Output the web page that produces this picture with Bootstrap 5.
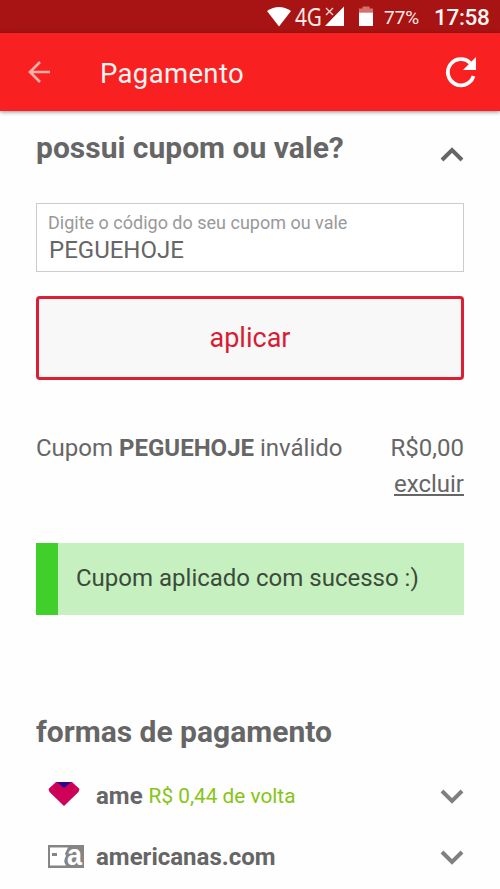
<!DOCTYPE html>
<html lang="pt-BR">
<head>
<meta charset="utf-8">
<meta name="viewport" content="width=device-width, initial-scale=1">
<title>Pagamento</title>
<link href="https://cdn.jsdelivr.net/npm/bootstrap@5.3.0/dist/css/bootstrap.min.css" rel="stylesheet">
<style>
body{font-family:Roboto,"Liberation Sans",sans-serif;color:#666;height:889px;overflow:hidden;background:#fefefe}
svg{display:block;flex:none;overflow:visible}
.status-bar{height:33px;background:#a81313;color:#fdeeea;padding-right:11px}
.status-pct{font-size:19px;line-height:33px;margin:2px 15px 0 10px;width:35px;white-space:nowrap}
.status-time{font-size:22.5px;font-weight:500;line-height:33px;width:55px;white-space:nowrap;color:#fff6f3;padding-top:2px;letter-spacing:-.3px}
.app-bar{height:78px;background:#f82020;padding:0 23px 0 28px;box-shadow:0 1px 4px rgba(0,0,0,.45);position:relative}
.app-title{font-size:27.5px;color:#fff4f2;letter-spacing:.35px;margin-left:49px;line-height:78px;padding-top:4px}
.checkout{padding:0 36px}
.section-title{font-size:30px;font-weight:700;line-height:40px;margin:0}
.coupon-head{padding-top:17px;height:92px}
.coupon-field{height:69px;border:1.5px solid #ccc;border-radius:0;padding:9px 11px 0;background:#fff}
.coupon-field label{font-size:18px;line-height:20px;color:#999;display:block}
.coupon-field input{font-size:24px;line-height:28px;height:32px;color:#666;padding:2px 0 0 1px}
.btn-apply{height:84px;margin-top:24px;border:3px solid #db1f35;border-radius:4px;background:#f8f8f8;color:#d91b34;font-size:27px;padding:0}
.coupon-result{font-size:24px;line-height:35.5px;margin-top:51px;height:112px}
.coupon-result a{color:#666}
.success-note{height:72px;background:#c6f0bf;border-left:22px solid #41cf2b;color:#3b4b3a;font-size:24px;line-height:70px;padding-left:18px;border-radius:0}
.pay-title{margin-top:97px;height:54px}
.pay-row{height:60.5px;padding-left:12px}
.pay-icon{width:48px}
.pay-name{font-size:24px;font-weight:700}
.cashback{font-size:20.8px;color:#86c513;margin-left:6px}
</style>
<script src="https://cdn.jsdelivr.net/npm/bootstrap@5.3.0/dist/js/bootstrap.bundle.min.js"></script>
</head>
<body>
<div class="status-bar d-flex align-items-center justify-content-end">
  <svg width="107" height="33" viewBox="267 0 107 33">
    <path d="M267 11Q279 3 291 11L279 26.500Z" fill="#fff"/>
    <text x="295" y="26" font-family="Noto Sans" font-size="25" textLength="27" lengthAdjust="spacingAndGlyphs" fill="#ffeae5">4G</text>
    <path d="M344 6.500V26H325Z" fill="#fff"/>
    <path d="M326 8L333 15M333 8L326 15" stroke="#fbdcd7" stroke-width="1.300"/>
    <path d="M362.500 6.500h7v2h3.500v4h-14v-4h3.500z" fill="#d4716d"/>
    <path d="M359 12.500h14V26h-14z" fill="#fff"/>
  </svg>
  <span class="status-pct">77%</span>
  <span class="status-time">17:58</span>
</div>
<nav class="app-bar d-flex align-items-center">
  <svg width="23" height="24" viewBox="0 0 23 24" fill="none" stroke="#ffb0ab" stroke-width="2.600"><path d="M22 12H2M12 2L2 12L12 22"/></svg>
  <span class="app-title">Pagamento</span>
  <svg class="ms-auto" width="32" height="32" viewBox="0 0 32 32"><path d="M25.300 7A13.100 13.100 0 1 0 28.500 20" fill="none" stroke="#fff" stroke-width="3.800"/><path d="M31 1V14H18Z" fill="#fff"/></svg>
</nav>
<main class="checkout">
  <section>
    <div class="coupon-head d-flex justify-content-between">
      <h2 class="section-title">possui cupom ou vale?</h2>
      <svg class="mt-3" width="24" height="24" viewBox="0 0 24 24" fill="none" stroke="#666" stroke-width="4"><path d="M2 16L12 6L22 16"/></svg>
    </div>
    <div class="coupon-field">
      <label for="coupon">Digite o código do seu cupom ou vale</label>
      <input id="coupon" class="form-control-plaintext" value="PEGUEHOJE">
    </div>
    <button class="btn btn-apply d-block w-100">aplicar</button>
    <div class="coupon-result d-flex justify-content-between">
      <div>Cupom <strong>PEGUEHOJE</strong> inválido</div>
      <div class="text-end">R$0,00<br><a href="#">excluir</a></div>
    </div>
    <div class="success-note">Cupom aplicado com sucesso :)</div>
  </section>
  <section>
    <h2 class="section-title pay-title">formas de pagamento</h2>
    <div class="pay-row d-flex align-items-center">
      <div class="pay-icon"><svg width="32" height="28" viewBox="0 0 32 28"><path d="M8 0H24L31.500 7L30.500 10L16 24L1.500 10L.5 7Z" fill="#ce0058"/><path d="M9 0H23L16 6Z" fill="#230a88"/></svg></div>
      <div class="pay-name">ame</div><div class="cashback">R$ 0,44 de volta</div>
      <svg class="ms-auto" width="24" height="24" viewBox="0 0 24 24" fill="none" stroke="#808080" stroke-width="4"><path d="M2 7L12 17L22 7"/></svg>
    </div>
    <div class="pay-row d-flex align-items-center">
      <div class="pay-icon"><svg width="36" height="23" viewBox="0 0 36 23"><path d="M0 0H36V23H0Z" fill="#858585"/><path d="M2 2.500H20L17 8.500L18 11Q14.500 16 18 20.500H2Z" fill="#fff"/><path d="M4 8h5v3H4z" fill="#858585"/><text x="19" y="19.500" font-family="Liberation Sans" font-weight="700" font-size="29" textLength="15" lengthAdjust="spacingAndGlyphs" fill="#fff">a</text></svg></div>
      <div class="pay-name">americanas.com</div>
      <svg class="ms-auto" width="24" height="24" viewBox="0 0 24 24" fill="none" stroke="#808080" stroke-width="4"><path d="M2 7L12 17L22 7"/></svg>
    </div>
  </section>
</main>
</body>
</html>
